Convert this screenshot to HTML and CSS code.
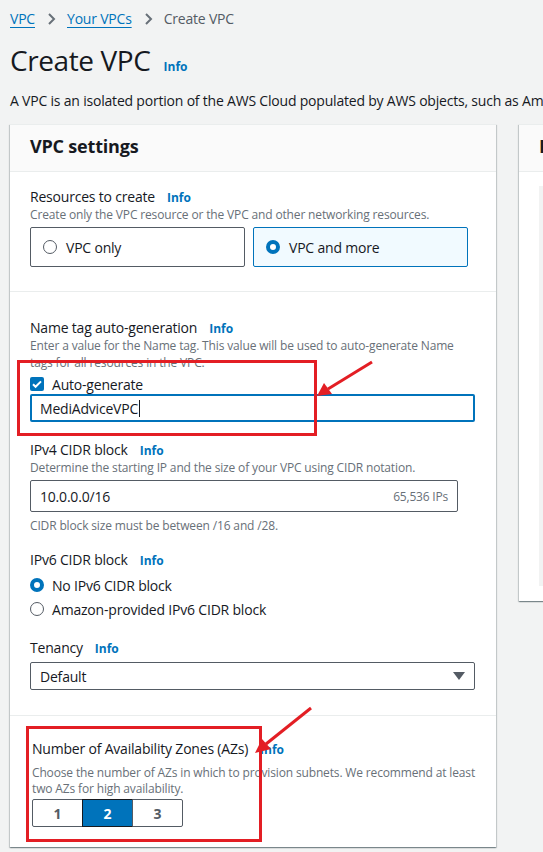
FILE: index.html
```html
<!DOCTYPE html>
<html lang="en">
<head>
<meta charset="utf-8">
<title>Create VPC</title>
<link rel="stylesheet" href="styles.css">
</head>
<body>
<div class="page">
  <nav class="crumbs">
    <a class="crumb-link" href="#">VPC</a>
    <svg class="chev" width="16" height="16" viewBox="0 0 16 16"><path d="M6 3l5 5-5 5" fill="none" stroke="#687078" stroke-width="2"/></svg>
    <a class="crumb-link" href="#">Your VPCs</a>
    <svg class="chev" width="16" height="16" viewBox="0 0 16 16"><path d="M6 3l5 5-5 5" fill="none" stroke="#687078" stroke-width="2"/></svg>
    <span class="crumb-current">Create VPC</span>
  </nav>

  <div class="title-row">
    <h1 class="title">Create VPC</h1>
    <a class="info" href="#">Info</a>
  </div>

  <p class="intro">A VPC is an isolated portion of the AWS Cloud populated by AWS objects, such as Amazon EC2 instances.</p>

  <div class="columns">
    <section class="card">
      <header class="card-head"><h2 class="card-title">VPC settings</h2></header>

      <div class="section sec-resources">
        <div class="label">Resources to create <a class="info" href="#">Info</a></div>
        <div class="hint">Create only the VPC resource or the VPC and other networking resources.</div>
        <div class="tiles">
          <div class="tile"><span class="radio"></span>VPC only</div>
          <div class="tile tile-on"><span class="radio radio-on"></span>VPC and more</div>
        </div>
      </div>

      <div class="section sec-main">
        <div class="label">Name tag auto-generation <a class="info" href="#">Info</a></div>
        <div class="hint hint-2">Enter a value for the Name tag. This value will be used to auto-generate Name tags for all resources in the VPC.</div>
        <div class="check-row">
          <span class="checkbox"><svg width="14" height="14" viewBox="0 0 14 14"><path d="M3 7.2l2.6 2.6L11 4.4" fill="none" stroke="#fff" stroke-width="2"/></svg></span>
          Auto-generate
        </div>
        <div class="input input-focus"><span>MediAdviceVPC</span><span class="caret"></span></div>

        <div class="label label-gap">IPv4 CIDR block <a class="info" href="#">Info</a></div>
        <div class="hint">Determine the starting IP and the size of your VPC using CIDR notation.</div>
        <div class="input input-cidr"><span>10.0.0.0/16</span><span class="ips">65,536 IPs</span></div>
        <div class="hint hint-after">CIDR block size must be between /16 and /28.</div>

        <div class="label label-gap2">IPv6 CIDR block <a class="info" href="#">Info</a></div>
        <div class="radio-row radio-row-first"><span class="radio radio-on"></span>No IPv6 CIDR block</div>
        <div class="radio-row"><span class="radio"></span>Amazon-provided IPv6 CIDR block</div>

        <div class="label label-gap3">Tenancy <a class="info" href="#">Info</a></div>
        <div class="input select"><span>Default</span><svg width="14" height="10" viewBox="0 0 14 10"><path d="M1 1h12L7 9z" fill="#545b64"/></svg></div>
      </div>

      <div class="section sec-az">
        <div class="label">Number of Availability Zones (AZs) <a class="info" href="#">Info</a></div>
        <div class="hint hint-az">Choose the number of AZs in which to provision subnets. We recommend at least two AZs for high availability.</div>
        <div class="segments">
          <span class="seg">1</span><span class="seg seg-on">2</span><span class="seg">3</span>
        </div>
      </div>
    </section>

    <aside class="card card-side">
      <header class="card-head"><h2 class="card-title">Preview</h2></header>
      <div class="side-body"><div class="side-box"></div></div>
    </aside>
  </div>
</div>

<svg class="marks" width="543" height="852" viewBox="0 0 543 852">
  <rect x="18.5" y="361.5" width="297" height="73" fill="none" stroke="#e31e24" stroke-width="3"/>
  <line x1="372" y1="362" x2="328" y2="389" stroke="#e31e24" stroke-width="3"/>
  <path d="M317 396l7-13 8 11z" fill="#e31e24"/>
  <rect x="27.5" y="727.5" width="233" height="113" fill="none" stroke="#e31e24" stroke-width="3"/>
  <line x1="311" y1="708" x2="266" y2="744" stroke="#e31e24" stroke-width="3"/>
  <path d="M255 753l7-14 9 10z" fill="#e31e24"/>
</svg>
</body>
</html>
```

FILE: styles.css
```css
* { box-sizing: border-box; }
html, body { margin: 0; padding: 0; }
body {
  background: #f2f3f3;
  font-family: "Open Sans", "Liberation Sans", sans-serif;
  font-size: 14px;
  letter-spacing: -0.2px;
  color: #16191f;
  width: 543px;
  height: 852px;
  overflow: hidden;
  position: relative;
}
.page { padding: 9px 0 0 10px; }
a { text-decoration: none; }

.crumbs { display: flex; align-items: center; height: 20px; line-height: 20px; gap: 8px; white-space: nowrap; }
.crumb-link { color: #0073bb; text-decoration: underline; text-underline-offset: 3px; }
.crumb-current { color: #545b64; }
.chev { flex: none; }

.title-row { display: flex; align-items: baseline; margin-top: 13px; height: 36px; }
.title { margin: 0; font-size: 28px; font-weight: 400; line-height: 36px; letter-spacing: -0.4px; }
.info { color: #0073bb; font-weight: 700; font-size: 12px; margin-left: 13px; line-height: 16px; letter-spacing: 0; }

.intro { margin: 13px 0 0; line-height: 20px; height: 20px; white-space: nowrap; }

.columns { display: grid; grid-template-columns: 486px 486px; gap: 23px; margin-top: 13px; }

.card {
  background: #fff;
  border-top: 1px solid #eaeded;
  box-shadow: 0 1px 1px 0 rgba(0, 28, 36, .3), 1px 1px 1px 0 rgba(0, 28, 36, .15), -1px 1px 1px 0 rgba(0, 28, 36, .15);
}
.card-head { background: #fafafa; border-bottom: 1px solid #eaeded; height: 47px; padding: 10px 20px 0; }
.card-title { margin: 0; font-size: 18px; font-weight: 700; line-height: 22px; white-space: nowrap; letter-spacing: -0.2px; }

.section { border-bottom: 1px solid #eaeded; padding: 13px 20px 24px; }
.sec-main { padding-top: 24px; padding-bottom: 25px; }
.sec-az { padding: 21px 14px 20px 22px; border-bottom: none; }

.label { display: flex; align-items: baseline; height: 22px; padding-top: 2px; line-height: 20px; white-space: nowrap; }
.label .info { margin-left: 12px; }
.label-gap { margin-top: 16px; }
.label-gap2 { margin-top: 14px; }
.label-gap3 { margin-top: 17px; }
.hint { font-size: 12px; line-height: 16px; color: #687078; letter-spacing: -0.15px; }
.hint-2 { line-height: 17px; margin-top: -1px; }
.hint-after { margin-top: 6px; }
.hint-az { margin-top: 6px; }

.tiles { display: grid; grid-template-columns: 215px 215px; gap: 8px; margin-top: 4px; }
.tile { height: 40px; border: 1px solid #545b64; border-radius: 2px; display: flex; align-items: center; padding: 0 12px; gap: 9px; }
.tile-on { border-color: #0073bb; background: #f1faff; }

.radio { width: 14px; height: 14px; border-radius: 50%; border: 1.5px solid #545b64; flex: none; background: #fff; }
.radio-on { border: 4px solid #0073bb; }

.check-row { display: flex; align-items: center; gap: 8px; height: 20px; margin-top: 3px; }
.checkbox { width: 14px; height: 14px; background: #0073bb; border-radius: 2px; display: flex; flex: none; }

.input { border: 1px solid #545b64; border-radius: 2px; display: flex; align-items: center; padding: 0 9px; height: 28px; }
.input-focus { border: 2px solid #0073bb; padding: 0 8px; margin-top: 0; width: 445px; }
.caret { width: 1px; height: 17px; background: #16191f; margin-left: 1px; }
.input-cidr { margin-top: 4px; height: 32px; width: 428px; justify-content: space-between; }
.ips { color: #687078; font-size: 12px; }

.radio-row { display: flex; align-items: center; gap: 8px; height: 20px; margin-top: 4px; }
.radio-row-first { margin-top: 5px; }

.select { margin-top: 4px; width: 445px; justify-content: space-between; padding-right: 8px; }

.segments { display: flex; margin-top: 2px; }
.seg { width: 51px; height: 28px; border: 1px solid #545b64; display: flex; align-items: center; justify-content: center; font-weight: 700; color: #545b64; margin-left: -1px; }
.seg:first-child { margin-left: 0; border-radius: 2px 0 0 2px; }
.seg:last-child { border-radius: 0 2px 2px 0; }
.seg-on { background: #0073bb; color: #fff; border-color: #16191f; }

.card-side { height: 477px; }
.side-body { padding: 14px 0 15px 20px; height: 429px; }
.side-box { background: #f2f3f3; height: 100%; }

.marks { position: absolute; left: 0; top: 0; pointer-events: none; }
```
